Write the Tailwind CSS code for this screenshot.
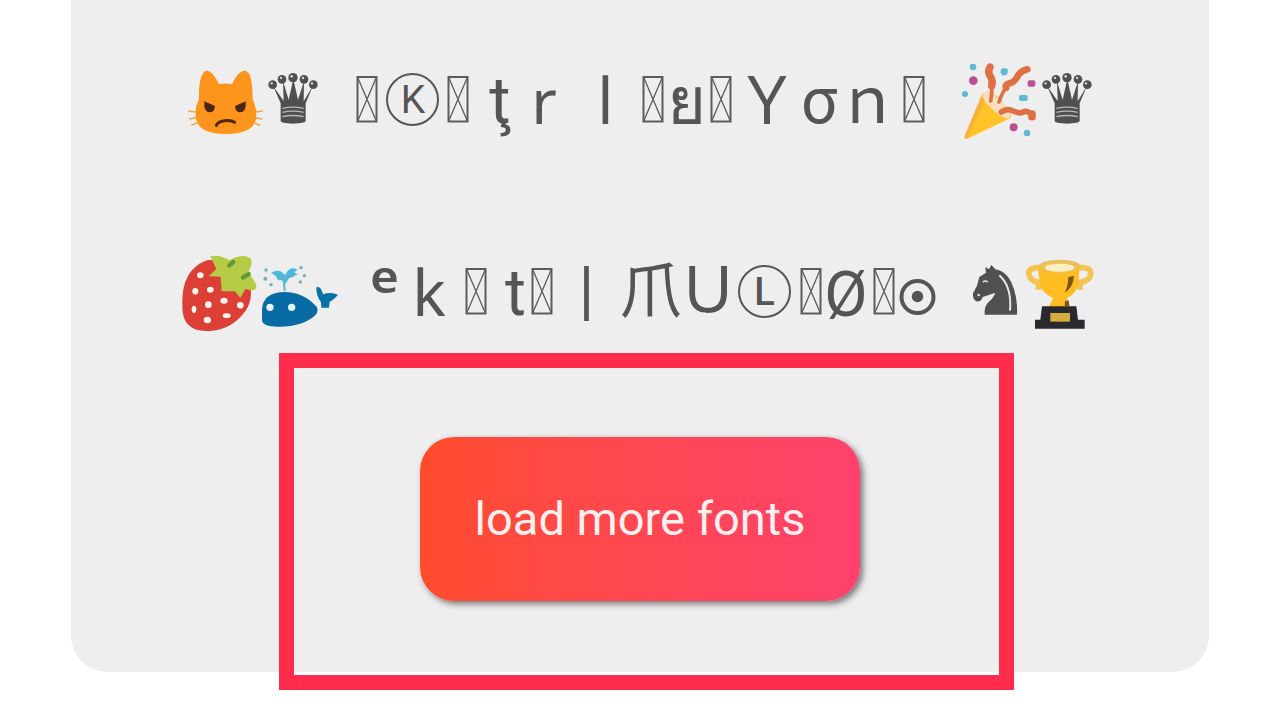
<!DOCTYPE html>
<html lang="en">
<head>
<meta charset="utf-8">
<title>Fonts</title>
<script src="https://cdn.jsdelivr.net/npm/@tailwindcss/browser@4"></script>
</head>
<body class="bg-white h-[720px] overflow-hidden">
<svg class="hidden">
  <symbol id="queen" viewBox="0 0 150 165">
    <g fill="#505050">
      <path d="M15 38 L38 91 V144 Q38 151 75 152 Q113 151 113 144 V91 L135 38 L107 85 L108 25 L90 80 L76 18 L62 80 L45 25 L47 84Z"/>
      <circle cx="14" cy="35" r="13"/><circle cx="42" cy="19" r="13"/><circle cx="75" cy="14" r="14"/><circle cx="108" cy="19" r="13"/><circle cx="136" cy="35" r="13"/>
    </g>
    <g fill="#d8d8d8"><circle cx="11" cy="31" r="3.5"/><circle cx="39" cy="15" r="3.5"/><circle cx="71" cy="10" r="4"/><circle cx="105" cy="15" r="3.5"/><circle cx="132" cy="31" r="3.5"/></g>
    <path d="M43 106q32-7 64 0M43 118q32-7 64 0M43 131q32-7 64 0" fill="none" stroke="#b9b9b9" stroke-width="4"/>
  </symbol>
  <symbol id="tofu" viewBox="0 0 24 100"><path d="M2.500 27h19v44.500h-19z" fill="none" stroke="#5c5c5c" stroke-width="2"/><path d="M2.500 27l19 44.500M21.500 27l-19 44.500" fill="none" stroke="#5c5c5c" stroke-width="1.300"/></symbol>
</svg>
<main class="ml-[71px] w-[1138px] h-[672px] rounded-b-[36px] bg-[#eeeeee] pt-[50px] text-[#555555] font-[Roboto,'Noto_Sans',sans-serif]">
  <div class="flex h-[100px] ml-[109px] leading-[100px] whitespace-nowrap">
    <svg class="w-[86px] h-[100px] shrink-0" viewBox="0 0 258 300">
      <path d="M25 183l24 3M27 207l23-4M34 226l19-8M249 183l-24 3M247 207l-23-4M240 226l-19-8" stroke="#efa84b" stroke-width="5"/>
      <path d="M47 195Q45 170 57 147Q55 90 70 68Q79 57 94 68Q106 78 117 103Q136 98 156 103Q167 78 181 67Q196 56 207 70Q218 93 218 147Q229 170 229 195Q230 252 138 252Q47 252 47 195Z" fill="#fd951c"/>
      <path d="M73 154l32 14q-1 19-16 19-16-1-16-22zM197 154l-32 14q1 19 16 19 16-1 16-22z" fill="#4a2610"/>
      <path d="M109 226q5-12 25-14t30 5" fill="none" stroke="#512700" stroke-width="9" stroke-linecap="round"/>
    </svg>
    <svg class="w-[50px] h-[55px] mt-[23px] ml-[2px] mr-[22px] shrink-0"><use href="#queen"/></svg>
    <svg class="w-6 h-[100px] ml-[15px] shrink-0"><use href="#tofu"/></svg>
    <span class="flex w-[66px] h-[100px] justify-center shrink-0 pt-[23px]"><span class="flex w-[53px] h-[53px] rounded-full border-[2.500px] border-[#555555] justify-center pl-[2px] text-[39px] leading-[51px]">K</span></span>
    <svg class="w-6 h-[100px] ml-[1px] shrink-0"><use href="#tofu"/></svg>
    <span class="flex w-[60px] mt-[1px] justify-center shrink-0 text-[65px]">ţ</span>
    <span class="flex w-[30px] justify-center shrink-0 text-[62px] font-['Noto_Sans'] -ml-[1px] mr-[1px]">r</span>
    <span class="flex w-[71px] ml-[10px] justify-center shrink-0 text-[63px] font-['Noto_Sans']">l</span>
    <svg class="w-6 h-[100px] shrink-0"><use href="#tofu"/></svg>
    <span class="flex w-[42px] mt-[1px] justify-center shrink-0 text-[67px]">ย</span>
    <svg class="w-6 h-[100px] ml-[2px] shrink-0"><use href="#tofu"/></svg>
    <span class="flex w-[68px] -mt-[4px] justify-center shrink-0 text-[65px] font-['Noto_Sans_CJK_JP']">Ｙ</span>
    <span class="flex w-9 mt-[2px] justify-center shrink-0 text-[64px]">σ</span>
    <span class="flex w-[62px] -mt-[4px] justify-center shrink-0 text-[62px] font-['Noto_Sans_CJK_JP']"><span class="-ml-[1px]">ｎ</span></span>
    <svg class="w-6 h-[100px] ml-[3px] shrink-0"><use href="#tofu"/></svg>
    <svg class="w-[98px] h-[100px] ml-[14px] shrink-0" viewBox="0 0 294 300">
      <path d="M74 258L127 132Q137 119 157 128Q190 149 212 192Q217 203 201 209L82 266Q71 269 74 258Z" fill="#ffc328"/>
      <path d="M74 258L127 132L137 143L83 265Z" fill="#f5b23d"/>
      <path d="M128 130Q144 116 178 147Q216 182 209 202Q190 214 151 172Q124 147 128 130Z" fill="#f5dfbd"/>
      <g fill="none" stroke="#df7044" stroke-linecap="round">
        <path d="M150 51q-8 14 1 28t4 29" stroke-width="22"/><path d="M155 108q2 20-3 45" stroke-width="11"/><path d="M262 58q-22 6-30 22t-23 20-11 14" stroke-width="20"/><path d="M198 114q-10 10-21 42" stroke-width="11"/><path d="M184 186q16-12 36-3t30 3 26 8" stroke-width="17"/><path d="M276 192v8" stroke-width="23"/>
      </g>
      <g fill="#60b8d4"><circle cx="99" cy="51" r="10"/><path d="M183 58l9-5 12 5-2 15-13 4-8-9z"/><circle cx="75" cy="132" r="9"/><rect x="237" y="135" width="26" height="18" rx="5"/><circle cx="261" cy="249" r="10"/></g>
      <g fill="#b85093"><circle cx="100" cy="92" r="13"/><rect x="263" y="91" width="23" height="19" rx="6"/><circle cx="221" cy="232" r="12"/></g>
    </svg>
    <svg class="w-[50px] h-[55px] mt-[23px] ml-[4px] shrink-0"><use href="#queen"/></svg>
  </div>
  <div class="flex h-[100px] mt-[95px] ml-[99px] leading-[100px] whitespace-nowrap">
    <svg class="w-[87px] h-[100px] shrink-0" viewBox="0 0 261 300">
      <path d="M37 165Q39 76 105 48Q124 39 154 58L242 130Q249 181 209 218Q169 258 108 258Q39 257 37 190Z" fill="#dc3f36"/>
      <path d="M121 34Q143 27 178 45Q203 32 223 33Q247 35 245 57L239 72Q233 80 240 88L259 119Q260 138 244 136L226 132L211 159L195 139L155 139L152 95L116 94L139 72Z" fill="#b5cb45"/>
      <path d="M178 61l12-10M219 98l17-11" stroke="#65983b" stroke-width="13" stroke-linecap="round"/>
      <g fill="#fff3ed"><ellipse cx="91" cy="91" rx="10" ry="9"/><ellipse cx="76" cy="139" rx="9" ry="10"/><ellipse cx="121" cy="134" rx="10" ry="9"/><ellipse cx="162" cy="167" rx="11" ry="9"/><ellipse cx="115" cy="179" rx="10" ry="10"/><ellipse cx="72" cy="193" rx="7" ry="11"/><ellipse cx="211" cy="181" rx="10" ry="10"/><ellipse cx="170" cy="212" rx="12" ry="7"/><ellipse cx="112" cy="225" rx="11" ry="10"/></g>
    </svg>
    <svg class="w-[93px] h-[100px] shrink-0" viewBox="261 0 279 300">
      <path d="M276 198Q276 141 345 141Q399 141 440 185Q447 197 436 211Q398 246 323 245Q277 245 276 225Z" fill="#086ba3"/>
      <path d="M439 127Q452 121 459 148Q482 140 504 149Q490 166 479 170L477 188H454L453 172Q438 153 439 127Z" fill="#0871a7"/>
      <path d="M345 138q-5-20 0-34" fill="none" stroke="#62bddd" stroke-width="7"/>
      <path d="M303 84q25-16 42 7 13-31 38-17l-11 8 12 6q-12 3-15 9-12-2-19 15-8 8-14-6-17 1-16-10-8-9-17-12z" fill="#4db7dc"/>
      <g fill="#77abc0"><circle cx="288" cy="75" r="5"/><circle cx="286" cy="101" r="6"/><circle cx="303" cy="119" r="5"/><circle cx="393" cy="68" r="5"/><circle cx="403" cy="92" r="5"/><circle cx="391" cy="111" r="5"/></g>
      <circle cx="300" cy="187" r="11" fill="#e4f8ff"/><circle cx="365" cy="187" r="11" fill="#e4f8ff"/>
    </svg>
    <span class="flex w-[69px] justify-center shrink-0 -mt-[9px] text-[76px] font-semibold font-['Noto_Sans']">ᵉ</span>
    <span class="flex w-[22px] justify-center shrink-0 -mt-[3px] -ml-[1px] text-[63px] font-['Noto_Sans']">k</span>
    <svg class="w-6 h-[94px] ml-[24px] shrink-0" viewBox="0 0 24 94"><use href="#tofu" width="24" height="100" y="-3"/></svg>
    <span class="flex w-[29px] ml-[13px] -mt-[1px] justify-center shrink-0 text-[64px]">t</span>
    <svg class="w-6 h-[94px] shrink-0" viewBox="0 0 24 94"><use href="#tofu" width="24" height="100" y="-3"/></svg>
    <span class="flex w-[65px] -mt-[5px] justify-center shrink-0 text-[65px]">|</span>
    <span class="flex w-[64px] -mt-[9px] justify-center shrink-0 text-[62px] font-['Noto_Sans_CJK_JP']">爪</span>
    <span class="flex w-[50px] -mt-[10px] justify-center shrink-0 text-[63px] font-['Noto_Sans_CJK_JP']">Ｕ</span>
    <span class="flex w-[63px] h-[100px] justify-center shrink-0 pt-[20px]"><span class="flex w-[53px] h-[53px] rounded-full border-[2px] border-[#555555] justify-center text-[38px] leading-[50px] font-medium">L</span></span>
    <svg class="w-6 h-[94px] ml-[3px] shrink-0" viewBox="0 0 24 94"><use href="#tofu" width="24" height="100" y="-3"/></svg>
    <span class="flex w-[46px] justify-center shrink-0 text-[63px]">Ø</span>
    <svg class="w-6 h-[94px] ml-[3px] shrink-0" viewBox="0 0 24 94"><use href="#tofu" width="24" height="100" y="-3"/></svg>
    <svg class="w-[43px] h-[100px] shrink-0" viewBox="0 0 43 100"><circle cx="21.500" cy="52" r="16" fill="none" stroke="#555" stroke-width="4"/><circle cx="21.500" cy="51.500" r="5.700" fill="#555"/></svg>
    <svg class="w-[73px] h-[100px] ml-[11px] shrink-0" viewBox="0 0 219 300">
      <path d="M104 209Q102 186 115 172Q131 158 136 143L114 151L98 156Q94 171 79 169Q67 163 69 145L81 122L88 96L108 83L106 66L117 73L124 60L136 73Q165 77 183 110Q204 153 201 209Z" fill="#505050"/>
      <path d="M148 91Q186 125 180 197" fill="none" stroke="#e5e5e5" stroke-width="6"/>
      <path d="M99 111q7-6 14 0" fill="none" stroke="#e5e5e5" stroke-width="5"/><circle cx="86" cy="150" r="4" fill="#ddd"/>
    </svg>
    <svg class="w-[87px] h-[100px] shrink-0" viewBox="219 0 261 300">
      <path d="M272 67Q237 67 236 84Q238 107 265 112V134M386 67Q423 67 422 85Q421 107 390 112V134" fill="none" stroke="#f3c550" stroke-width="17"/>
      <path d="M264 65H389L384 121Q377 147 350 160L359 186H296L309 160Q275 143 269 117Z" fill="#fcbc22"/>
      <ellipse cx="329" cy="64" rx="62" ry="20" fill="#e8c158"/><ellipse cx="329" cy="68" rx="44" ry="12" fill="#faeec5"/>
      <path d="M355 96l17-3q-3 36-28 50 10-18 11-47zM345 169l11-3 2 17h-14z" fill="#81531b"/>
      <path d="M276 184H379L384 224H404V251H255V224H271Z" fill="#292a2d"/><rect x="301" y="204" width="59" height="26" fill="#d5ac3e"/>
    </svg>
  </div>
  <section class="w-[735px] h-[337px] ml-[208px] mt-[8px] border-[15px] border-[#ff2c4c] pt-[69px] pl-[126px]">
    <button class="block w-[440px] h-[164px] rounded-[34px] bg-linear-to-r from-[#ff4b2b] to-[#ff416c] text-[#fff0f0] text-[47px] leading-[164px] shadow-[3px_3px_6px_rgba(0,0,0,0.5)]">load more fonts</button>
  </section>
</main>
</body>
</html>
